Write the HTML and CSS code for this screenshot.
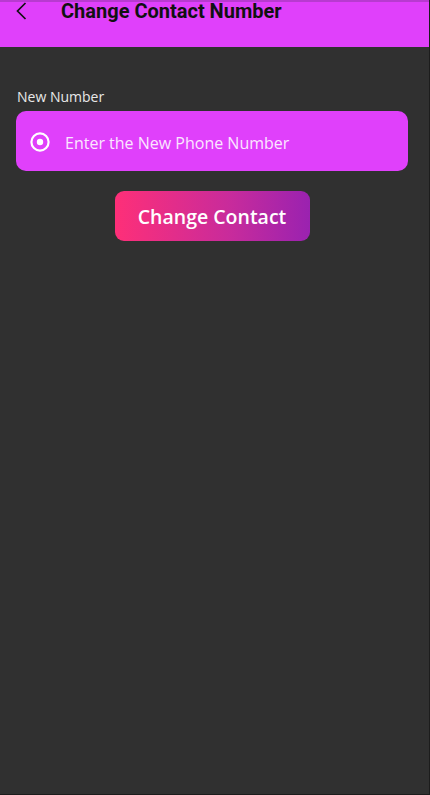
FILE: index.html
```html
<!DOCTYPE html>
<html>
<head>
<meta charset="utf-8">
<link rel="stylesheet" href="styles.css">
</head>
<body>
<div class="screen">
  <header class="appbar">
    <svg class="back" width="12" height="18" viewBox="0 0 12 18"><path d="M10.5 1 L2.5 9 L10.5 17" fill="none" stroke="#111" stroke-width="1.7"/></svg>
    <h1 class="title">Change Contact Number</h1>
  </header>
  <main class="content">
    <label class="label">New Number</label>
    <div class="field">
      <svg class="ficon" width="22" height="22" viewBox="0 0 22 22"><circle cx="11" cy="11" r="8.6" fill="none" stroke="#fff" stroke-width="2.2"/><circle cx="11" cy="11" r="3.2" fill="#fff"/></svg>
      <span class="placeholder">Enter the New Phone Number</span>
    </div>
    <div class="actions">
      <button class="btn">Change Contact</button>
    </div>
  </main>
</div>
</body>
</html>
```
FILE: styles.css
```css
html, body { margin: 0; padding: 0; }
body { background: #1c1c1c; width: 430px; height: 795px; overflow: hidden; }
.screen {
  width: 429px; height: 794px; background: #303030;
  font-family: "Open Sans", sans-serif;
}
.appbar {
  height: 45px; background: #e040fb; border-top: 2px solid #b83ad0;
  display: flex; align-items: flex-start; box-sizing: content-box;
}
.back { margin: 0 0 0 15px; }
.title {
  margin: -3px 0 0 34px; font-family: Roboto, sans-serif; font-weight: 700;
  font-size: 20px; line-height: 24px; color: #111;
}
.content { padding: 40px 21px 0 16px; }
.label { display: block; color: #e8e8e8; font-size: 14px; line-height: 20px; margin-left: 1px; }
.field {
  margin-top: 4px; height: 60px; background: #e040fb; border-radius: 10px;
  display: flex; align-items: center;
}
.ficon { margin: 2px 0 0 13px; }
.placeholder { margin: 3px 0 0 14px; color: #fbe6ff; font-size: 16px; }
.actions { display: flex; justify-content: center; margin-top: 20px; }
.btn {
  width: 195px; height: 50px; border: none; border-radius: 9px;
  background: linear-gradient(90deg, #fe2f78 0%, #c72b9c 60%, #9a22b0 100%);
  color: #fff; font-family: "Open Sans", sans-serif; font-weight: 600; font-size: 19.5px;
  padding: 0;
}
```
